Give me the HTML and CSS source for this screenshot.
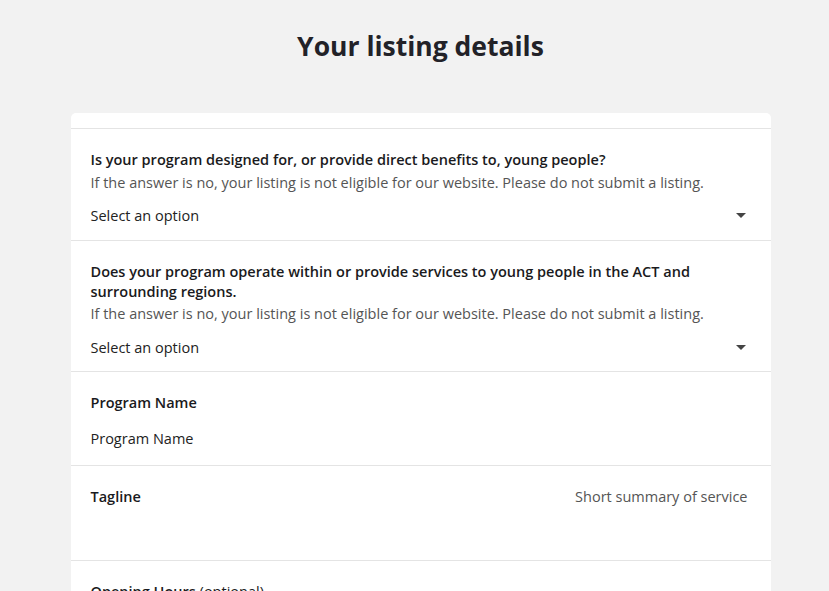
FILE: index.html
```html
<!DOCTYPE html>
<html lang="en">
<head>
<meta charset="utf-8">
<title>Your listing details</title>
<link rel="stylesheet" href="styles.css">
</head>
<body>
<main class="page">
  <h1 class="title">Your listing details</h1>
  <section class="card">
    <div class="card-top"></div>
    <div class="field">
      <div class="label">Is your program designed for, or provide direct benefits to, young people?</div>
      <div class="help">If the answer is no, your listing is not eligible for our website. Please do not submit a listing.</div>
      <div class="select"><span>Select an option</span><span class="caret"></span></div>
    </div>
    <div class="field field-long">
      <div class="label">Does your program operate within or provide services to young people in the ACT and surrounding regions.</div>
      <div class="help">If the answer is no, your listing is not eligible for our website. Please do not submit a listing.</div>
      <div class="select"><span>Select an option</span><span class="caret"></span></div>
    </div>
    <div class="field">
      <div class="label">Program Name</div>
      <div class="input">Program Name</div>
    </div>
    <div class="field field-tagline">
      <div class="label">Tagline</div>
      <div class="placeholder">Short summary of service</div>
    </div>
    <div class="field">
      <div class="label">Opening Hours <span class="optional">(optional)</span></div>
    </div>
  </section>
</main>
</body>
</html>
```
FILE: styles.css
```css
html, body {
  margin: 0;
  padding: 0;
  background: #f2f2f2;
}
body {
  font-family: "Open Sans", "Noto Sans", "Liberation Sans", sans-serif;
  color: #1f1f24;
}
.page {
  width: 700px;
  margin-left: calc(50% - 344px);
  padding-top: 28px;
}
.title {
  margin: 0 0 49px;
  text-align: center;
  font-size: 26.5px;
  line-height: 36px;
  font-weight: 700;
  color: #222228;
}
.card {
  background: #fff;
  border-radius: 5px;
  overflow: hidden;
}
.card-top {
  height: 15px;
  border-bottom: 1px solid #e4e4e4;
}
.field {
  padding: 21px 23px 0 20px;
  border-bottom: 1px solid #e4e4e4;
}
.label {
  font-size: 14.5px;
  font-weight: 600;
  line-height: 20px;
  color: #1a1a20;
}
.optional {
  font-weight: 400;
}
.help {
  margin-top: 3px;
  font-size: 14.5px;
  line-height: 20px;
  color: #555;
}
.field-long .help {
  margin-top: 2px;
}
.select {
  display: flex;
  justify-content: space-between;
  align-items: center;
  height: 24px;
  margin-top: 10px;
  padding-bottom: 13px;
  font-size: 14.5px;
  color: #222;
}
.field-long .select {
  margin-top: 11px;
  padding-bottom: 12px;
}
.caret {
  width: 0;
  height: 0;
  border-left: 5px solid transparent;
  border-right: 5px solid transparent;
  border-top: 5px solid #444;
  margin-right: 2px;
}
.input {
  height: 24px;
  line-height: 24px;
  margin-top: 14px;
  padding-bottom: 14px;
  font-size: 14.5px;
  color: #222;
}
.field-tagline {
  display: flex;
  justify-content: space-between;
  height: 73px;
}
.placeholder {
  font-size: 14.5px;
  line-height: 20px;
  color: #555;
}
```
